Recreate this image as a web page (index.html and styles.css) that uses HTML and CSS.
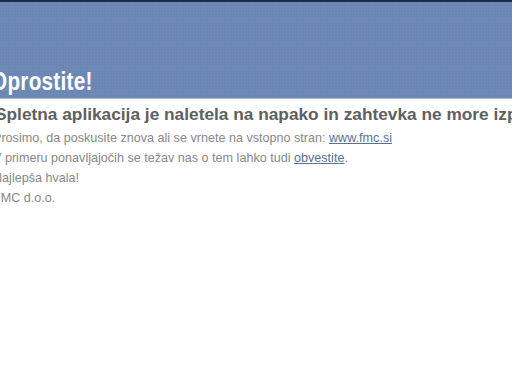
FILE: index.html
```html
<!DOCTYPE html>
<html>
<head>
    <meta charset="utf-8">
    <title>Napaka</title>
    <link rel="stylesheet" href="styles.css">
</head>
<body>
    <div class="banner">
        <p class="title">Oprostite!</p>
    </div>
    <div class="content">
        <p class="error">Spletna aplikacija je naletela na napako in zahtevka ne more izpolniti.</p>
        <p class="line">Prosimo, da poskusite znova ali se vrnete na vstopno stran: <a href="#">www.fmc.si</a></p>
        <p class="line">V primeru ponavljajočih se težav nas o tem lahko tudi <a href="#">obvestite</a>.</p>
        <p class="line">Najlepša hvala!</p>
        <p class="line">FMC d.o.o.</p>
    </div>
</body>
</html>
```

FILE: styles.css
```css
body {
    margin: 0;
    background-color: white;
    font-family: "Liberation Sans", Arial, sans-serif;
    overflow: hidden;
    white-space: nowrap;
}

.banner {
    height: 96px;
    border-top: 2px solid #1c2b45;
    border-bottom: 1px solid #a9bbd6;
    background-color: #6b88b4;
    background-image: radial-gradient(circle, #7590bb 0.8px, transparent 1px);
    background-size: 3px 3px;
    display: flex;
    align-items: flex-end;
}

.title {
    margin: 0 0 2px -9px;
    color: white;
    font-size: 25px;
    font-weight: bold;
    letter-spacing: 0.3px;
    transform: scaleX(0.83);
    transform-origin: left bottom;
}

.content {
    margin-left: -5px;
    padding-top: 5px;
}

.error {
    margin: 0 0 3px 0;
    color: #606060;
    font-size: 17.3px;
    font-weight: bold;
}

.line {
    margin: 0 0 0 -2px;
    color: #888;
    font-size: 12.6px;
    line-height: 20px;
}

.line a {
    color: #5a6f96;
}
```
